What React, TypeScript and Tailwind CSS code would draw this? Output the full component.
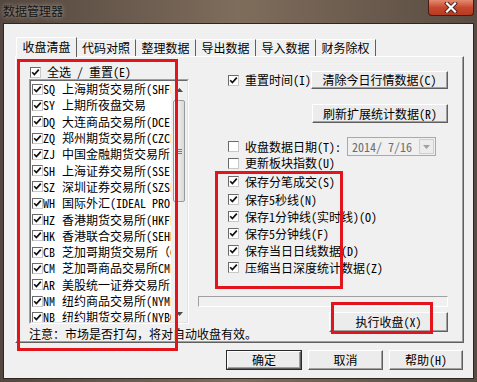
import React from "react";

const FONT = "font-['Noto_Sans_Mono_CJK_SC','Noto_Sans_CJK_SC',sans-serif]";

function Check({ on }: { on: boolean }) {
  return (
    <span className="w-[11px] h-[11px] shrink-0 bg-white border border-t-[#6a6a6a] border-l-[#6a6a6a] border-r-[#c8c8c8] border-b-[#c8c8c8] flex items-center justify-center">
      {on && (
        <svg width="9" height="9" viewBox="0 0 9 9">
          <path d="M1.2 4.2 L3.4 6.6 L7.8 1.6" stroke="#111" strokeWidth="1.7" fill="none" />
        </svg>
      )}
    </span>
  );
}

function Btn({ children, className }: { children: React.ReactNode; className: string }) {
  return (
    <div
      className={`flex items-center justify-center border border-t-white border-l-white border-r-[#5f5f5f] border-b-[#5f5f5f] shadow-[inset_-1px_-1px_0_#a0a0a0] bg-[#ececec] whitespace-nowrap ${className}`}
    >
      {children}
    </div>
  );
}

const rows: [string, string][] = [
  ["SQ", "上海期货交易所(SHFE)"],
  ["SY", "上期所夜盘交易"],
  ["DQ", "大连商品交易所(DCE)"],
  ["ZQ", "郑州期货交易所(CZCE)"],
  ["ZJ", "中国金融期货交易所(CFFEX)"],
  ["SH", "上海证券交易所(SSE)"],
  ["SZ", "深圳证券交易所(SZSE)"],
  ["WH", "国际外汇(IDEAL PRO)"],
  ["HZ", "香港期货交易所(HKFE)"],
  ["HK", "香港联合交易所(SEHK)"],
  ["CB", "芝加哥期货交易所（CBOT）"],
  ["CM", "芝加哥商品交易所CME"],
  ["AR", "美股统一证券交易所"],
  ["NM", "纽约商品交易所(NYMEX)"],
  ["NB", "纽约期货交易所(NYBOT)"],
];

const tabs = ["收盘清盘", "代码对照", "整理数据", "导出数据", "导入数据", "财务除权"];

export default function App() {
  return (
    <div
      className={`w-[477px] h-[382px] flex flex-col overflow-hidden bg-linear-to-r from-[#54473f] via-[#7f6d5c] to-[#5a4c42] text-[12px] leading-[14px] text-black ${FONT}`}
    >
      {/* title bar */}
      <div className="h-[23px] shrink-0 flex items-start justify-between">
        <div className="pl-[3px] pt-[4px] text-[12px] leading-[14px] text-[#151515] [text-shadow:0_0_5px_rgba(255,255,255,0.6)]">
          数据管理器
        </div>
        <div className="mr-[3px] w-[46px] h-[16px] rounded-b-[4px] border border-t-0 border-[#4a1a10] bg-linear-to-b from-[#e28a72] via-[#c9482d] to-[#b63b22] flex items-center justify-center">
          <svg width="14" height="11" viewBox="0 0 14 11">
            <path d="M3 1.5 L11 9.5 M11 1.5 L3 9.5" stroke="#4a2018" strokeWidth="4" strokeLinecap="square" />
            <path d="M3 1.5 L11 9.5 M11 1.5 L3 9.5" stroke="#ffffff" strokeWidth="2.2" strokeLinecap="square" />
          </svg>
        </div>
      </div>

      {/* client area */}
      <div className="relative mx-[3px] mb-[3px] flex-1 border border-[#2e2620] bg-[#f0f0f0] flex flex-col">
        {/* tabs */}
        <div className="mt-[13px] ml-[12px] h-[19px] flex items-end">
          {tabs.map((t, i) =>
            i === 0 ? (
              <div
                key={t}
                className="relative z-10 -mb-px w-[61px] h-[20px] bg-[#f0f0f0] border-t border-l border-r border-t-white border-l-white border-r-[#5f5f5f] flex items-start justify-center pt-[2px]"
              >
                {t}
              </div>
            ) : (
              <div
                key={t}
                className={`${i === 1 ? "w-[59px]" : "w-[60px]"} h-[17px] border-t border-r border-t-white border-r-[#5f5f5f] flex items-start justify-center pt-[1px]`}
              >
                {t}
              </div>
            )
          )}
        </div>

        {/* panel */}
        <div className="ml-[11px] w-[449px] h-[287px] border border-t-white border-l-white border-r-[#5f5f5f] border-b-[#5f5f5f] shadow-[inset_-1px_-1px_0_#a0a0a0] flex">
          {/* left column */}
          <div className="ml-[13px] w-[160px] shrink-0 pt-[9px] flex flex-col">
            <div className="h-[12px] flex items-center">
              <span className="ml-[1px] shrink-0">
                <Check on />
              </span>
              <span className="ml-[6px] whitespace-nowrap">全选 / 重置(E)</span>
            </div>
            <div className="mt-[1px] h-[245px] border border-t-[#a0a0a0] border-l-[#a0a0a0] border-r-white border-b-white">
              <div className="h-full border border-t-[#696969] border-l-[#696969] border-r-[#e3e3e3] border-b-[#e3e3e3] bg-white flex">
                <div className="flex-1 min-w-0 overflow-hidden">
                  {rows.map(([c, n]) => (
                    <div key={c} className="h-[16.3px] flex items-center whitespace-nowrap">
                      <span className="ml-[1px] shrink-0">
                        <Check on />
                      </span>
                      <span className="w-[19px] shrink-0">{c}</span>
                      <span className="shrink-0">{n}</span>
                    </div>
                  ))}
                </div>
                {/* scrollbar */}
                <div className="w-[16px] shrink-0 bg-[#f0f0f0] flex flex-col items-center">
                  <div className="h-[17px] w-full flex items-center justify-center">
                    <svg width="7" height="4" viewBox="0 0 7 4">
                      <path d="M0 4 L3.5 0 L7 4 Z" fill="#4d4d4d" />
                    </svg>
                  </div>
                  <div className="mt-[2px] w-[12px] h-[102px] rounded-[2px] border border-[#9a9a9a] bg-linear-to-r from-[#f7f7f7] to-[#dadada] flex flex-col items-center justify-center gap-[1px]">
                    <div className="w-[6px] h-px bg-[#7a7a7a]" />
                    <div className="w-[6px] h-px bg-[#7a7a7a]" />
                    <div className="w-[6px] h-px bg-[#7a7a7a]" />
                  </div>
                  <div className="flex-1" />
                  <div className="h-[17px] w-full flex items-center justify-center">
                    <svg width="7" height="4" viewBox="0 0 7 4">
                      <path d="M0 0 L3.5 4 L7 0 Z" fill="#4d4d4d" />
                    </svg>
                  </div>
                </div>
              </div>
            </div>
            <div className="mt-[3px] h-[14px] whitespace-nowrap">注意：市场是否打勾，将对自动收盘有效。</div>
          </div>

          {/* right column */}
          <div className="ml-[9px] w-[250px] shrink-0 flex flex-col">
            <div className="mt-[14px] h-[18px] flex items-center pl-[30px]">
              <Check on />
              <span className="ml-[6px] whitespace-nowrap">重置时间(I)</span>
              <Btn className="ml-auto w-[137px] h-[18px] shrink-0">清除今日行情数据(C)</Btn>
            </div>
            <div className="mt-[15px] h-[19px] flex justify-end">
              <Btn className="w-[136px] h-[19px]">刷新扩展统计数据(R)</Btn>
            </div>
            <div className="mt-[14px] h-[19px] flex items-center pl-[30px]">
              <Check on={false} />
              <span className="ml-[6px] whitespace-nowrap">收盘数据日期(T):</span>
              <div className="ml-auto mr-[12px] w-[89px] h-[19px] shrink-0 border border-[#a9a9a9] bg-[#f0f0f0] flex items-center">
                <span className="ml-[4px] flex-1 text-[#6d6d6d] whitespace-pre">2014/ 7/16</span>
                <div className="mr-[1px] w-[15px] h-[15px] border border-[#cfcfcf] bg-[#ececec] flex items-center justify-center">
                  <svg width="7" height="4" viewBox="0 0 7 4">
                    <path d="M0 0 L3.5 4 L7 0 Z" fill="#a0a0a0" />
                  </svg>
                </div>
              </div>
            </div>
            <div className="h-[14px] flex items-center pl-[30px]">
              <Check on={false} />
              <span className="ml-[6px] whitespace-nowrap">更新板块指数(U)</span>
            </div>
            <div className="mt-[3px] h-[17px] flex items-center pl-[30px]">
              <Check on />
              <span className="ml-[6px] whitespace-nowrap">保存分笔成交(S)</span>
            </div>
            <div className="mt-[1px] h-[17px] flex items-center pl-[30px]">
              <Check on />
              <span className="ml-[6px] whitespace-nowrap">保存5秒线(N)</span>
            </div>
            <div className="h-[17px] flex items-center pl-[30px]">
              <Check on />
              <span className="ml-[6px] whitespace-nowrap">保存1分钟线(实时线)(O)</span>
            </div>
            <div className="h-[17px] flex items-center pl-[30px]">
              <Check on />
              <span className="ml-[6px] whitespace-nowrap">保存5分钟线(F)</span>
            </div>
            <div className="h-[17px] flex items-center pl-[30px]">
              <Check on />
              <span className="ml-[6px] whitespace-nowrap">保存当日日线数据(D)</span>
            </div>
            <div className="h-[17px] flex items-center pl-[30px]">
              <Check on />
              <span className="ml-[6px] whitespace-nowrap">压缩当日深度统计数据(Z)</span>
            </div>
            <div className="mt-[20px] h-[11px] border border-t-[#a0a0a0] border-l-[#a0a0a0] border-r-white border-b-white" />
            <div className="mt-[5px] flex justify-end">
              <Btn className="w-[119px] h-[20px]">执行收盘(X)</Btn>
            </div>
          </div>
        </div>

        {/* bottom buttons */}
        <div className="mt-[7px] pr-[10px] h-[20px] flex justify-end gap-[6px]">
          <div className="w-[76px] h-[20px] border border-[#2a2a2a]">
            <Btn className="w-full h-full">确定</Btn>
          </div>
          <Btn className="w-[75px] h-[20px]">取消</Btn>
          <Btn className="w-[74px] h-[20px]">帮助(H)</Btn>
        </div>

        {/* red annotation boxes */}
        <div className="pointer-events-none absolute z-20 left-[13px] top-[35px] w-[161px] h-[292px] border-[3px] border-[#e2141c]" />
        <div className="pointer-events-none absolute z-20 left-[211px] top-[147px] w-[128px] h-[118px] border-[3px] border-[#e2141c]" />
        <div className="pointer-events-none absolute z-20 left-[327px] top-[278px] w-[102px] h-[32px] border-[3px] border-[#e2141c]" />
      </div>
    </div>
  );
}
